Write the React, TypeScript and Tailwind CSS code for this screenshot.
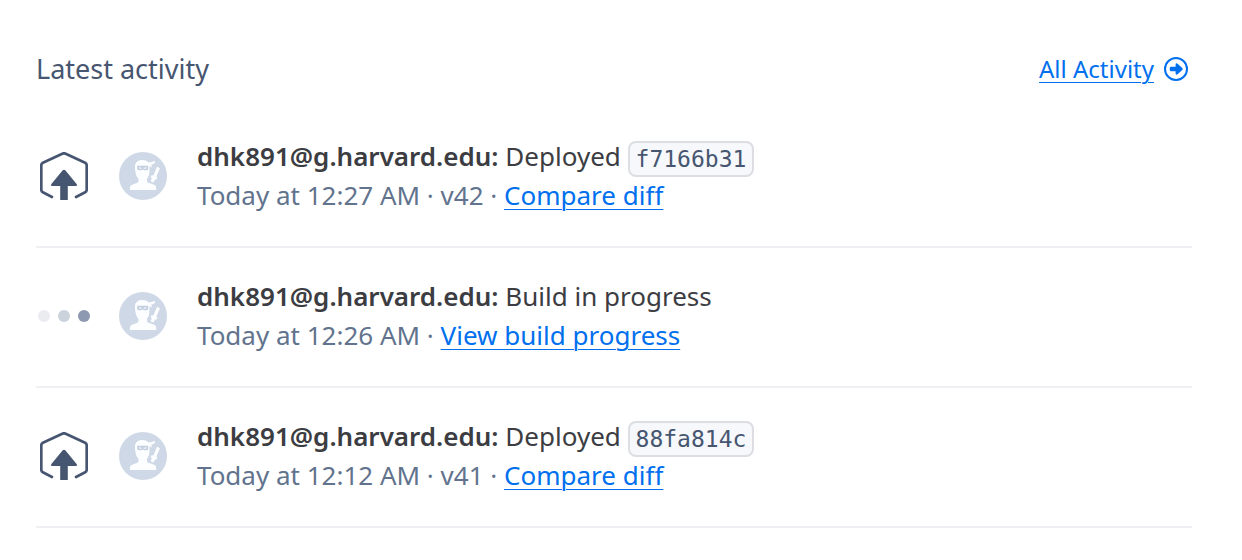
import type { ReactNode } from "react";

type Activity = {
  kind: "deploy" | "build";
  user: string;
  action: string;
  commit?: string;
  time: string;
  version?: string;
  link: string;
};

const activities: Activity[] = [
  { kind: "deploy", user: "dhk891@g.harvard.edu:", action: "Deployed", commit: "f7166b31", time: "Today at 12:27 AM", version: "v42", link: "Compare diff" },
  { kind: "build", user: "dhk891@g.harvard.edu:", action: "Build in progress", time: "Today at 12:26 AM", link: "View build progress" },
  { kind: "deploy", user: "dhk891@g.harvard.edu:", action: "Deployed", commit: "88fa814c", time: "Today at 12:12 AM", version: "v41", link: "Compare diff" },
];

function DeployIcon() {
  return (
    <svg viewBox="0 0 48 48" className="size-12" fill="none" aria-hidden="true">
      <path
        d="M12 45 L2.8 40.3 Q1.3 39.5 1.3 37.8 V13.3 Q1.3 11.6 2.9 10.8 L22.3 1.7 Q24 .9 25.7 1.7 L45.1 10.8 Q46.7 11.6 46.7 13.3 V37.8 Q46.7 39.5 45.2 40.3 L36 45"
        stroke="#475670"
        strokeWidth="2.7"
        strokeLinecap="round"
      />
      <path
        d="M22.5 18.6 Q24 17 25.5 18.6 L36.8 32.3 Q37.6 34 36 34 H27.8 V48 H20.2 V34 H12 Q10.4 34 11.2 32.3 Z"
        fill="#475670"
      />
    </svg>
  );
}

function BuildIcon() {
  return (
    <svg viewBox="0 0 54 12" className="h-3 w-[54px]" aria-hidden="true">
      <circle cx="7" cy="6" r="6" fill="#ebecf0" />
      <circle cx="27" cy="6" r="6" fill="#cbd2dc" />
      <circle cx="47" cy="6" r="6" fill="#8c99b0" />
    </svg>
  );
}

function NinjaAvatar() {
  return (
    <svg viewBox="0 0 48 48" className="size-12 shrink-0" aria-hidden="true">
      <circle cx="24" cy="24" r="24" fill="#cfd8e6" />
      <g fill="#fcfeff">
        <path d="M16 14 C16.3 9.8 19.5 8 23.5 8 C26 8 28 8.8 29.4 10.3 C31 10.6 32.6 10 36 8.8 L35.8 11 C34.5 12.2 33 12.4 31.6 12.6 C33 13.2 33 14.5 32.4 15.4 L30.6 14 L30.4 19.5 C30.3 23 29.4 25.2 28 26.8 V29.8 C29.4 31.2 32.5 31.7 35.2 32.8 C37 33.6 37.4 35 37.2 38 H11 C10.8 35 11.2 33.6 13 32.8 C15.7 31.7 18.6 31.2 19.4 29.8 V26.8 C17 24.8 15.8 18.5 16 14 Z" />
        <path d="M38 14.8 L41 16.2 L37.4 24.6 L38.4 25.4 L37.5 27.6 L36.2 27.4 L34.4 30.6 L31.5 29.2 L32.9 26.3 L31.6 25.4 L32.6 23 L34.4 23.6 Z" />
      </g>
      <path d="M18.2 13.8 H29.2 V17 Q28.8 18.2 27.2 18.2 H25.2 L23.7 17.4 L22.2 18.2 H20.2 Q18.2 18.2 18.2 16.5 Z" fill="#c3cfdf" />
      <path d="M19.8 14.8 L22.7 15.8 V17 H20.4 Z M27.6 14.8 L24.7 15.8 V17 H27 Z" fill="#e8edf4" />
    </svg>
  );
}

function TextLink({ children }: { children: ReactNode }) {
  return (
    <a href="#" className="text-[#0070ee] underline decoration-1 underline-offset-4">
      {children}
    </a>
  );
}

function ActivityRow({ item }: { item: Activity }) {
  return (
    <li className="flex items-center border-b-2 border-[#eef0f4] pt-[29px] pb-[31px]">
      <div className="mr-[27px] flex w-14 shrink-0 justify-center">
        {item.kind === "deploy" ? <DeployIcon /> : <BuildIcon />}
      </div>
      <NinjaAvatar />
      <div className="ml-[30px] text-[26px] leading-[39px]">
        <p className="text-[#3c3d42]">
          <strong className="font-semibold">{item.user}</strong> {item.action}
          {item.commit && (
            <>
              {" "}
              <code className="rounded-lg border-2 border-[#dcdee3] bg-[#f6f8fc] px-1.5 py-[3px] align-middle font-['DejaVu_Sans_Mono',monospace] text-[23px] leading-6 text-[#475670]">
                {item.commit}
              </code>
            </>
          )}
        </p>
        <p className="text-[#62738d]">
          {item.time} · {item.version && <>{item.version} · </>}
          <TextLink>{item.link}</TextLink>
        </p>
      </div>
    </li>
  );
}

export default function App() {
  return (
    <main className="min-h-screen bg-white pt-[49px] pr-[50px] pl-9 font-['Noto_Sans',sans-serif]">
      <header className="flex h-10 items-center justify-between pr-1">
        <h2 className="text-[27px] leading-9 text-[#475670]">Latest activity</h2>
        <a href="#" className="flex items-center gap-2.5 text-2xl text-[#0070ee]">
          <span className="underline decoration-1 underline-offset-4">All Activity</span>
          <svg viewBox="0 0 24 24" className="size-6" aria-hidden="true">
            <circle cx="12" cy="12" r="11" fill="none" stroke="currentColor" strokeWidth="2" />
            <path d="M7 9.8 H11.6 V7.6 Q11.8 5.6 13.6 6.8 L18.3 11 Q19.2 12 18.3 13 L13.6 17.2 Q11.8 18.4 11.6 16.4 V14.2 H7 Q5.8 14.2 5.8 13 V11 Q5.8 9.8 7 9.8 Z" fill="currentColor" />
          </svg>
        </a>
      </header>
      <ul className="mt-[19px]">
        {activities.map((item) => (
          <ActivityRow key={item.time} item={item} />
        ))}
      </ul>
    </main>
  );
}
